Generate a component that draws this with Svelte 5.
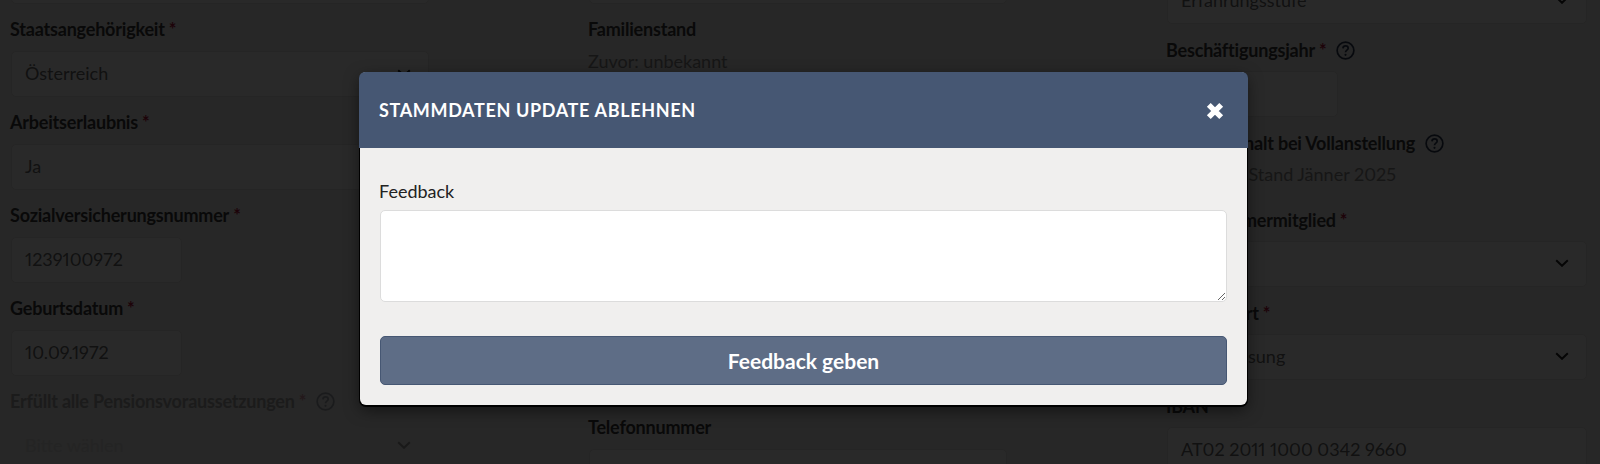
<script>
  const left = [
    { label: 'Staatsangehörigkeit', req: true, value: 'Österreich', select: true },
    { label: 'Arbeitserlaubnis', req: true, value: 'Ja', select: true },
    { label: 'Sozialversicherungsnummer', req: true, value: '1239100972', short: true },
    { label: 'Geburtsdatum', req: true, value: '10.09.1972', short: true },
    { label: 'Erfüllt alle Pensionsvoraussetzungen', req: true, value: 'Bitte wählen', select: true, help: true, disabled: true }
  ];
  const middle = [
    { label: 'Straße', value: '' },
    { label: 'Postleitzahl', value: '' },
    { label: 'Ort', value: '' },
    { label: 'Telefonnummer', value: '' }
  ];
</script>

{#snippet help()}
  <svg class="help" viewBox="0 0 20 20" aria-hidden="true">
    <circle cx="10" cy="10" r="8.8" />
    <path d="M7.3 7.8c.1-1.7 1.2-2.6 2.8-2.6s2.7 1 2.7 2.3c0 2.1-2.8 2.2-2.8 4.4" />
    <circle class="dot" cx="10" cy="14.6" r="1.1" />
  </svg>
{/snippet}

{#snippet control(f)}
  <div class="control" class:short={f.short}>
    <span>{f.value}</span>
    {#if f.select}
      <svg class="chev" viewBox="0 0 14 8" aria-hidden="true"><path d="M1.2 1.2 7 6.8l5.8-5.6" /></svg>
    {/if}
  </div>
{/snippet}

{#snippet field(f)}
  <div class="field" class:disabled={f.disabled}>
    {#if f.label}
      <div class="label">
        <span>{f.label}</span>{#if f.req}<span class="req">*</span>{/if}
        {#if f.help}{@render help()}{/if}
      </div>
    {/if}
    {@render control(f)}
  </div>
{/snippet}

<div class="page">
  <div class="col col-a">
    <div class="field"><div class="control"></div></div>
    {#each left as f}{@render field(f)}{/each}
  </div>

  <div class="col col-b">
    <div class="field"><div class="control"></div></div>
    <div class="field">
      <div class="label">Familienstand</div>
      <div class="prev">Zuvor: unbekannt</div>
      <div class="control tight"></div>
    </div>
    {#each middle as f}{@render field(f)}{/each}
  </div>

  <div class="col col-c">
    {@render field({ value: 'Erfahrungsstufe', select: true })}
    {@render field({ label: 'Beschäftigungsjahr', req: true, help: true, value: '', short: true })}
    <div class="field salary">
      <div class="label">
        <span>Monatsgehalt bei Vollanstellung</span>
        {@render help()}
      </div>
      <div class="prev">Laut KV – Stand Jänner 2025</div>
    </div>
    {@render field({ label: 'Ärztekammermitglied', req: true, value: '', select: true })}
    {@render field({ label: 'Zahlungsart', req: true, value: 'Überweisung', select: true })}
    {@render field({ label: 'IBAN', value: 'AT02 2011 1000 0342 9660' })}
  </div>

  <div class="backdrop">
    <div class="modal">
      <header>
        <h2>STAMMDATEN UPDATE ABLEHNEN</h2>
        <button class="close" aria-label="Schließen">
          <svg viewBox="0 0 18 18" aria-hidden="true"><path d="M2.8 2.8 15.2 15.2M15.2 2.8 2.8 15.2" /></svg>
        </button>
      </header>
      <div class="body">
        <label for="fb">Feedback</label>
        <textarea id="fb"></textarea>
        <button class="submit">Feedback geben</button>
      </div>
    </div>
  </div>
</div>

<style>
  :global(body) {
    margin: 0;
    background: #f0efee;
    font-family: Lato, "Liberation Sans", sans-serif;
  }
  .page {
    position: relative;
    height: 464px;
    overflow: hidden;
    display: flex;
    padding-left: 11px;
    box-sizing: border-box;
    font-size: 18px;
    font-variant-numeric: proportional-nums;
    background: #f0efee;
  }
  .col { width: 418px; flex: none; }
  .col-a, .col-b { margin-top: -42px; }
  .col-b { margin-left: 160px; }
  .col-c { margin-left: 160px; margin-top: -22px; width: 420px; }
  .field { margin-bottom: 16px; }
  .salary { margin-bottom: 26px; }
  .label {
    display: flex;
    align-items: center;
    box-sizing: border-box;
    height: 20px;
    margin: 0 0 11px -1px;
    font-weight: 700;
    line-height: 20px;
    letter-spacing: -0.2px;
    color: #3c3c3c;
    white-space: pre;
  }
  .col-a .label, .col-b .label { padding-bottom: 2px; }
  .req { margin-left: 4px; color: #b3123c; }
  .help {
    width: 19px;
    height: 19px;
    margin-left: 10px;
    fill: none;
    stroke: #2b3a55;
    stroke-width: 1.8;
  }
  .help .dot { fill: #2b3a55; stroke: none; }
  .control {
    display: flex;
    align-items: center;
    justify-content: space-between;
    box-sizing: border-box;
    height: 46px;
    padding: 0 13px 2px;
    background: #fff;
    border: 1px solid #e4e4e4;
    border-radius: 5px;
    color: #6b6b6b;
  }
  .control.short { width: 171px; }
  .control.tight { margin-top: 6px; }
  .chev {
    width: 14px;
    height: 8px;
    margin-right: 4px;
    fill: none;
    stroke: #222;
    stroke-width: 2;
  }
  .prev { height: 20px; line-height: 20px; margin: 0 0 0 -1px; color: #8c8c8c; }
  .disabled { opacity: 0.4; }
  .disabled .control { background: transparent; border-color: transparent; color: #c4c4c4; }

  .backdrop {
    position: absolute;
    inset: 0;
    background: rgba(0, 0, 0, 0.84);
  }
  .modal {
    position: absolute;
    left: 360px;
    top: 72px;
    width: 887px;
    height: 333px;
    background: #f0efee;
    border-radius: 6px;
    box-shadow: 0 1px 0 1px #000, 0 5px 15px rgba(0, 0, 0, 0.5);
  }
  header {
    display: flex;
    align-items: center;
    justify-content: space-between;
    height: 76px;
    margin: 0 -1px;
    padding: 0 24.5px 0 20px;
    box-sizing: border-box;
    background: #465773;
    border-radius: 6px 6px 0 0;
    color: #fff;
  }
  h2 {
    margin: 0;
    font-size: 18px;
    font-weight: 700;
    letter-spacing: 0.65px;
  }
  .close {
    width: 18px;
    height: 18px;
    margin-top: 1px;
    padding: 0;
    border: 0;
    background: none;
  }
  .close svg {
    display: block;
    fill: none;
    stroke: #fff;
    stroke-width: 5.4;
  }
  .body {
    display: flex;
    flex-direction: column;
    padding: 33px 20px 20px;
  }
  .body label {
    height: 20px;
    margin: 0 0 9px -1px;
    line-height: 20px;
    color: #222;
    font-size: 18px;
  }
  textarea {
    display: block;
    box-sizing: border-box;
    height: 92px;
    margin: 0 0 34px;
    background: #fff;
    border: 1px solid #dcdcdc;
    border-radius: 5px;
  }
  .submit {
    height: 49px;
    padding: 0;
    background: #5e6d86;
    border: 1px solid #465773;
    border-radius: 5px;
    color: #fff;
    font: 700 21px Lato, "Liberation Sans", sans-serif;
  }
</style>
